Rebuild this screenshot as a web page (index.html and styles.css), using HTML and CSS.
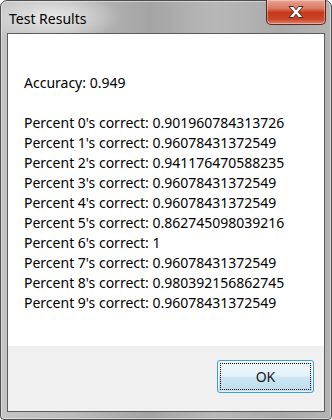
FILE: index.html
```html
<!DOCTYPE html>
<html lang="en">
<head>
  <meta charset="UTF-8" />
  <meta name="viewport" content="width=device-width, initial-scale=1.0" />
  <title>Test Results</title>
  <link rel="stylesheet" href="styles.css">
</head>
<body>

  <div class="window">
    <!-- Title bar -->
    <div class="titlebar">
      <span class="title">Test Results</span>
      <button class="close-btn" aria-label="Close">
        <svg width="18" height="14" viewBox="0 0 18 14">
          <path d="M2 1.5 L6.5 1.5 L9 4.8 L11.5 1.5 L16 1.5 L11.3 7 L16 12.5 L11.5 12.5 L9 9.2 L6.5 12.5 L2 12.5 L6.7 7 Z"
                fill="#ffffff" stroke="#4a2a26" stroke-width="1" stroke-linejoin="round" />
        </svg>
      </button>
    </div>

    <!-- Client area -->
    <div class="client">
      <div class="content">
        <p class="line">Accuracy: 0.949</p>
        <div class="results">
          <p class="line">Percent 0's correct: 0.901960784313726</p>
          <p class="line">Percent 1's correct: 0.96078431372549</p>
          <p class="line">Percent 2's correct: 0.941176470588235</p>
          <p class="line">Percent 3's correct: 0.96078431372549</p>
          <p class="line">Percent 4's correct: 0.96078431372549</p>
          <p class="line">Percent 5's correct: 0.862745098039216</p>
          <p class="line">Percent 6's correct: 1</p>
          <p class="line">Percent 7's correct: 0.96078431372549</p>
          <p class="line">Percent 8's correct: 0.980392156862745</p>
          <p class="line">Percent 9's correct: 0.96078431372549</p>
        </div>
      </div>
      <div class="footer">
        <button class="ok-btn"><span class="focus">OK</span></button>
      </div>
    </div>
  </div>

</body>
</html>
```

FILE: styles.css
```css
body {
  margin: 0;
  padding: 0;
  background-color: #ffffff;
  font-family: 'Noto Sans', 'Open Sans', sans-serif;
}

.window {
  box-sizing: border-box;
  width: 332px;
  height: 420px;
  display: flex;
  flex-direction: column;
  padding: 0 6px 7px 6px;
  border: 1px solid #4e4e4e;
  border-radius: 7px 7px 4px 4px;
  background:
    radial-gradient(ellipse 70px 24px at 50px 16px, rgba(235,235,235,0.95), rgba(235,235,235,0) 100%),
    linear-gradient(to right, #c4c4c4 0%, #bcbcbc 20%, #a4a4a4 45%, #b8b8b8 65%, #aaaaaa 85%, #b4b4b4 100%);
  box-shadow: inset 0 0 0 1px rgba(255,255,255,0.45);
}

.titlebar {
  height: 32px;
  display: flex;
  align-items: flex-start;
  justify-content: space-between;
  flex-shrink: 0;
}

.title {
  font-size: 14px;
  color: #000000;
  margin: 8px 0 0 2px;
}

.close-btn {
  width: 60px;
  height: 25px;
  margin: -1px -1px 0 0;
  padding: 0;
  border: 1px solid #5a2a22;
  border-top: none;
  border-radius: 0 0 5px 5px;
  background: linear-gradient(to bottom, #eaa392 0%, #da7a62 35%, #c8381a 52%, #c9442a 80%, #e0866a 100%);
  box-shadow: inset 0 0 0 1px rgba(255,255,255,0.35);
  display: flex;
  align-items: center;
  justify-content: center;
}

.client {
  flex: 1;
  display: flex;
  flex-direction: column;
  border: 1px solid #5c5c5c;
  background-color: #f0f0f0;
}

.content {
  background-color: #ffffff;
  height: 312px;
  padding: 39px 0 0 16px;
  box-sizing: border-box;
  font-size: 14px;
  color: #000000;
}

.line {
  margin: 0;
  line-height: 20px;
  white-space: nowrap;
}

.results {
  margin-top: 20px;
}

.footer {
  flex: 1;
  display: flex;
  justify-content: flex-end;
  align-items: flex-start;
  padding: 14px 10px 0 0;
}

.ok-btn {
  width: 97px;
  height: 33px;
  padding: 2px;
  border: 1px solid #3c9fd6;
  border-radius: 3px;
  background: linear-gradient(to bottom, #eef6fb 0%, #e4f1f9 48%, #cde6f3 52%, #bcdcee 100%);
  box-shadow: inset 0 0 0 1px rgba(255,255,255,0.6);
  font-family: 'Noto Sans', 'Open Sans', sans-serif;
  font-size: 14px;
  color: #1a1a1a;
}

.focus {
  display: flex;
  align-items: center;
  justify-content: center;
  height: 100%;
  box-sizing: border-box;
  border: 1px dotted #000000;
}
```
